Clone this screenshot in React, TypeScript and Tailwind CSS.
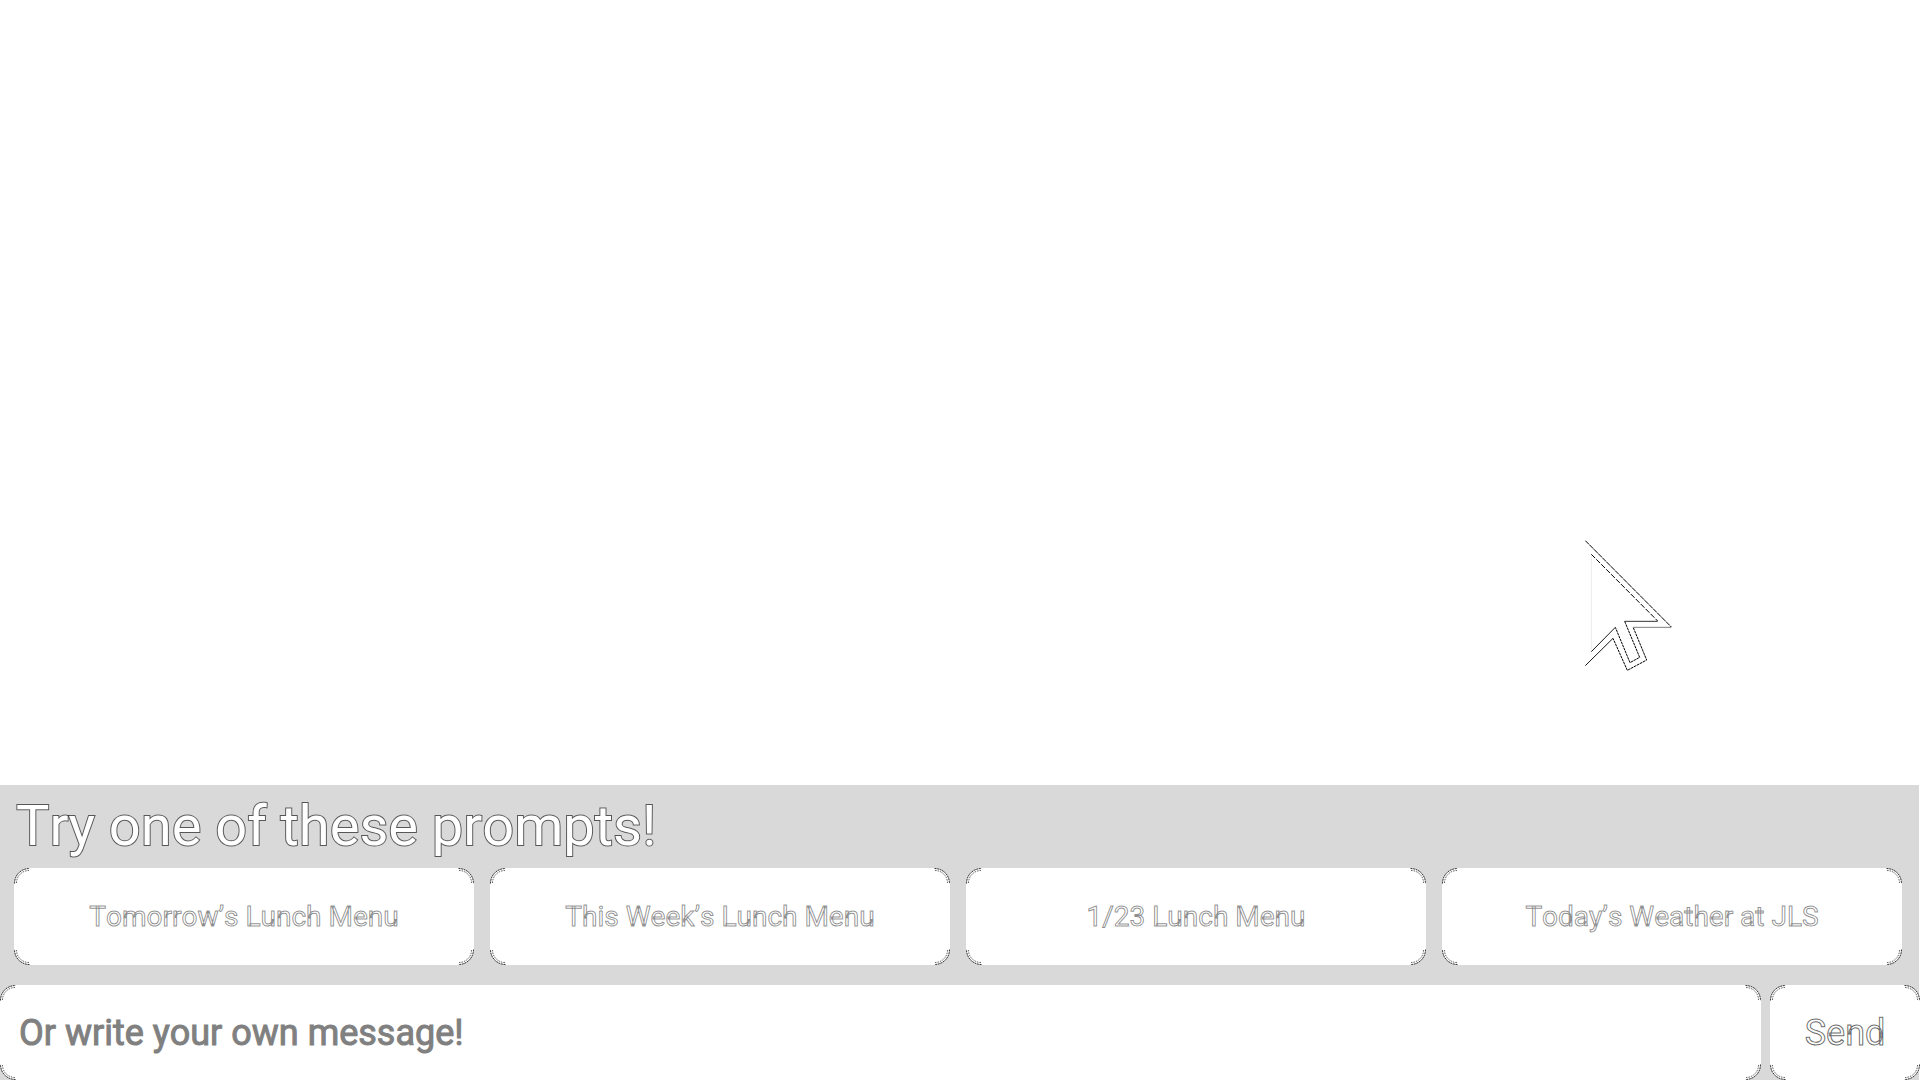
import React from "react";

const prompts = [
  "Tomorrow’s Lunch Menu",
  "This Week’s Lunch Menu",
  "1/23 Lunch Menu",
  "Today’s Weather at JLS",
];

function Corner({ className }: { className: string }) {
  return (
    <svg
      aria-hidden="true"
      viewBox="0 0 16 16"
      fill="none"
      className={`pointer-events-none absolute size-4 ${className}`}
    >
      <path d="M.5 15.5C.5 7 7 .5 15.5 .5" stroke="#000" strokeOpacity=".8" strokeDasharray="2 .6" />
      <path d="M2.5 15C2.5 8 8 2.5 15 2.5" stroke="#000" strokeOpacity=".6" strokeDasharray="1.6 1" />
    </svg>
  );
}

function Corners() {
  return (
    <>
      <Corner className="top-0 left-0" />
      <Corner className="top-0 right-0 rotate-90" />
      <Corner className="right-0 bottom-0 rotate-180" />
      <Corner className="bottom-0 left-0 -rotate-90" />
    </>
  );
}

function Pointer() {
  return (
    <svg
      aria-hidden="true"
      viewBox="75 60 261 393"
      fill="none"
      stroke="#000"
      className="absolute right-[248px] bottom-[114px] h-[131px] w-[87px]"
    >
      <path d="M76 62L334 321" strokeWidth="3" strokeDasharray="16 2" />
      <path d="M334 322H220" strokeWidth="3" strokeOpacity=".5" />
      <path d="M220 323L260 420L202 451L159 355" strokeWidth="3" strokeDasharray="8 2" />
      <path d="M159 355L76 437" strokeWidth="3" strokeOpacity=".9" />
      <path d="M94 103L293 303" strokeWidth="3" strokeDasharray="16 5" />
      <path d="M293 304H194" strokeWidth="3" strokeOpacity=".8" />
      <path d="M194 304L239 412L210 428L166 322" strokeWidth="3" strokeDasharray="8 2" />
      <path d="M166 322L94 395" strokeWidth="3" strokeOpacity=".9" />
      <path d="M94 395V103" strokeWidth="3" strokeOpacity=".08" />
    </svg>
  );
}

export default function App() {
  return (
    <div className="flex min-h-screen flex-col bg-white font-[Roboto,sans-serif] [font-kerning:none]">
      <main className="relative flex-1">
        <Pointer />
      </main>
      <footer className="border-r border-white bg-[#d9d9d9]">
        <h1 className="px-4 pt-1.5 pb-1.5 text-[56px] leading-[71px] font-normal text-white [-webkit-text-stroke:2px_rgba(0,0,0,0.6)] [paint-order:stroke_fill]">
          Try one of these prompts!
        </h1>
        <div className="grid grid-cols-4 gap-4 pr-[17px] pl-[14px]">
          {prompts.map((prompt) => (
            <button
              key={prompt}
              type="button"
              className="relative h-[97px] rounded-2xl bg-white text-[28px] leading-8 text-white [-webkit-text-stroke:1px_rgba(0,0,0,0.45)]"
            >
              {prompt}
              <Corners />
            </button>
          ))}
        </div>
        <form className="mt-5 -mr-px flex gap-[9px]" onSubmit={(e) => e.preventDefault()}>
          <div className="relative flex-1">
            <input
              type="text"
              aria-label="Message"
              placeholder="Or write your own message!"
              className="block h-[95px] w-full rounded-2xl bg-white px-[19px] text-[36px] text-gray-700 outline-none placeholder:text-[#808080] placeholder:[-webkit-text-stroke:1px_#808080]"
            />
            <Corners />
          </div>
          <button
            type="submit"
            className="relative h-[95px] w-[150px] rounded-2xl bg-white text-[36px] text-white [-webkit-text-stroke:1px_rgba(0,0,0,0.6)]"
          >
            Send
            <Corners />
          </button>
        </form>
      </footer>
    </div>
  );
}
